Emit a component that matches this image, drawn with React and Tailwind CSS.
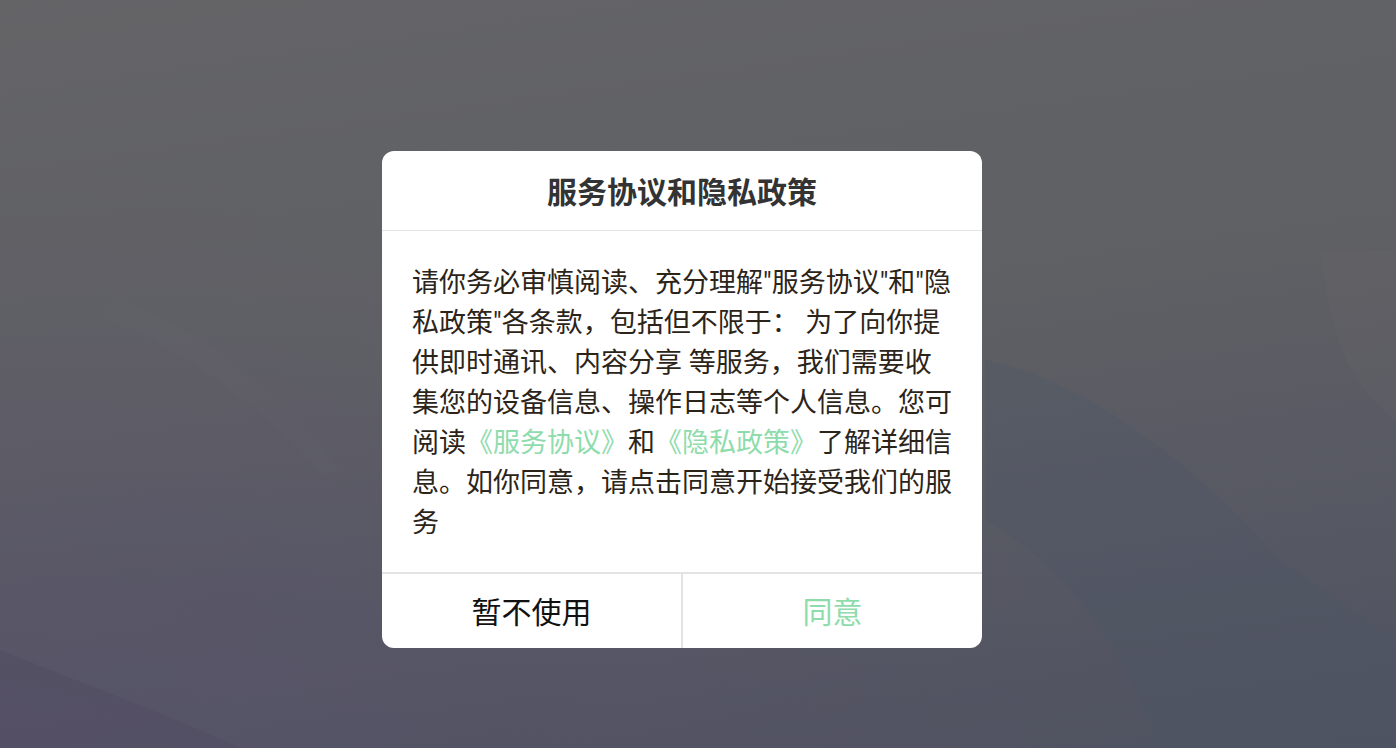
import React from "react";

const lines = [
  [{ t: '请你务必审慎阅读、充分理解"服务协议"和"隐' }],
  [{ t: '私政策"各条款，包括但不限于： 为了向你提' }],
  [{ t: "供即时通讯、内容分享 等服务，我们需要收" }],
  [{ t: "集您的设备信息、操作日志等个人信息。您可" }],
  [
    { t: "阅读" },
    { t: "《服务协议》", link: true },
    { t: "和" },
    { t: "《隐私政策》", link: true },
    { t: "了解详细信" },
  ],
  [{ t: "息。如你同意，请点击同意开始接受我们的服" }],
  [{ t: "务" }],
];

// faint swirl strokes in the wallpaper
function Waves() {
  return (
    <svg
      className="absolute inset-0 w-full h-full pointer-events-none"
      viewBox="0 0 1396 748"
      preserveAspectRatio="none"
    >
      <path d="M120 300 C 230 340 300 420 340 470 L 325 476 C 270 420 210 360 100 316 Z" fill="#ffffff" opacity="0.012" />
      <path d="M985 360 C 1080 380 1180 450 1280 560 L 1396 640 L 1396 748 L 1160 748 C 1120 640 1060 560 985 520 Z" fill="#4d5566" opacity="0.3" />
      <path d="M1320 250 C 1330 320 1340 380 1396 420 L 1396 250 Z" fill="#666468" opacity="0.25" />
      <path d="M0 650 C 100 690 180 720 240 748 L 0 748 Z" fill="#524c62" opacity="0.45" />
    </svg>
  );
}

export default function App() {
  return (
    <div
      className="relative w-full h-[748px] overflow-hidden flex items-center justify-center bg-[linear-gradient(172deg,#646467_0%,#5f6064_45%,#565863_75%,#4f5260_100%)]"
      style={{ fontFamily: 'Roboto, "Noto Sans CJK SC", "Noto Sans", sans-serif' }}
    >
      <div className="absolute inset-0 bg-[radial-gradient(ellipse_at_0%_100%,rgba(88,78,110,0.45),transparent_55%)]" />
      <Waves />

      <div className="relative mt-[51px] mr-[32px] w-[600px] bg-white rounded-[12px] overflow-hidden">
        <div className="h-[80px] flex items-center justify-center border-b border-[#e3e3e3]">
          <span className="pt-[4px] text-[30px] font-bold text-[#333333] leading-none">
            服务协议和隐私政策
          </span>
        </div>

        <div className="pt-[32px] pb-[29px] px-[30px] text-[27px] leading-[40px] text-[#2c2419]">
          {lines.map((line, i) => (
            <div key={i} className="whitespace-nowrap">
              {line.map((s, j) =>
                s.link ? (
                  <span key={j} className="text-[#8edcac]">
                    {s.t}
                  </span>
                ) : (
                  <span key={j}>{s.t}</span>
                )
              )}
            </div>
          ))}
        </div>

        <div className="flex h-[76px] border-t-2 border-[#e3e3e3]">
          <button className="flex-1 flex items-center justify-center pt-[2px] text-[30px] text-[#111111] border-r-2 border-[#e3e3e3]">
            暂不使用
          </button>
          <button className="flex-1 flex items-center justify-center pt-[2px] text-[30px] text-[#8edcac]">
            同意
          </button>
        </div>
      </div>
    </div>
  );
}
